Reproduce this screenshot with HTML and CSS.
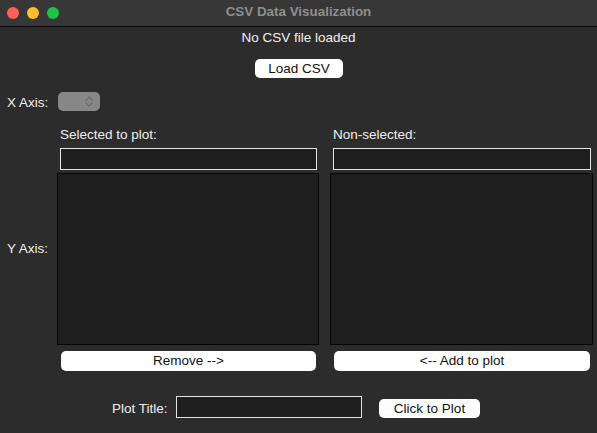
FILE: index.html
```html
<!DOCTYPE html>
<html lang="en">
<head>
<meta charset="utf-8">
<title>CSV Data Visualization</title>
<link rel="stylesheet" href="styles.css">
</head>
<body>
<div class="window">
  <header class="titlebar">
    <div class="lights">
      <span class="light red"></span>
      <span class="light yellow"></span>
      <span class="light green"></span>
    </div>
    <div class="title">CSV Data Visualization</div>
  </header>
  <main class="content">
    <p class="status">No CSV file loaded</p>
    <div class="load-row"><button class="btn load">Load CSV</button></div>
    <div class="xaxis">
      <span class="label">X Axis:</span>
      <div class="combo">
        <svg width="10" height="13" viewBox="0 0 10 13" class="chev">
          <path d="M2 5 L5 2 L8 5" fill="none" stroke="#6c6c6c" stroke-width="1.3" stroke-linecap="round" stroke-linejoin="round"/>
          <path d="M2 8 L5 11 L8 8" fill="none" stroke="#6c6c6c" stroke-width="1.3" stroke-linecap="round" stroke-linejoin="round"/>
        </svg>
      </div>
    </div>
    <div class="lists">
      <div class="col-head left">Selected to plot:</div>
      <div class="col-head right">Non-selected:</div>
      <div class="ylabel">Y Axis:</div>
      <div class="entry left"></div>
      <div class="entry right"></div>
      <div class="listbox left"></div>
      <div class="listbox right"></div>
      <button class="btn wide left">Remove --&gt;</button>
      <button class="btn wide right">&lt;-- Add to plot</button>
    </div>
    <div class="plot-row">
      <span class="label">Plot Title:</span>
      <div class="entry title-entry"></div>
      <button class="btn plot">Click to Plot</button>
    </div>
  </main>
</div>
</body>
</html>
```
FILE: styles.css
```css
* { box-sizing: border-box; }
html, body { margin: 0; padding: 0; }
body {
  width: 597px;
  height: 433px;
  overflow: hidden;
  background: #2c2c2c;
  font-family: "Liberation Sans", Arial, sans-serif;
  font-size: 13.5px;
  color: #efefef;
}
.window {
  width: 597px;
  height: 433px;
  background: #2c2c2c;
  display: flex;
  flex-direction: column;
}
.titlebar {
  height: 27px;
  background: #373737;
  border-bottom: 1px solid #0a0a0a;
  position: relative;
  display: flex;
  align-items: center;
  justify-content: center;
}
.lights {
  position: absolute;
  left: 7px;
  top: 7px;
  display: flex;
  gap: 8px;
}
.light {
  width: 12px;
  height: 12px;
  border-radius: 50%;
  display: block;
}
.red { background: #fe5f57; }
.yellow { background: #febc2e; }
.green { background: #1fc146; }
.title {
  font-weight: bold;
  color: #8e8e8e;
  font-size: 13.4px;
  line-height: 16px;
  margin-top: -2px;
}
.content {
  display: flex;
  flex-direction: column;
  padding-top: 3px;
}
.status {
  margin: 0;
  text-align: center;
  line-height: 16px;
  height: 16px;
}
.load-row {
  display: flex;
  justify-content: center;
  margin-top: 13px;
}
.btn {
  font-family: inherit;
  font-size: 13.5px;
  background: #ffffff;
  color: #111;
  border: none;
  border-radius: 5px;
  padding: 0;
  height: 19px;
  line-height: 19px;
}
.load { width: 88px; margin-left: 1px; }
.xaxis {
  display: flex;
  align-items: center;
  margin-top: 14px;
  height: 19px;
}
.xaxis .label {
  width: 58px;
  padding-left: 7px;
  padding-top: 2px;
}
.combo {
  width: 42px;
  height: 19px;
  background: #878787;
  border-radius: 5px;
  display: flex;
  align-items: center;
  justify-content: flex-end;
  padding-right: 6px;
}
.lists {
  display: grid;
  grid-template-columns: 46px 262px 263px;
  grid-template-rows: 21px 22px 175px 26px;
  column-gap: 11px;
  margin-top: 16px;
}
.left { grid-column: 2; }
.right { grid-column: 3; }
.col-head {
  grid-row: 1;
  align-self: start;
  line-height: 16px;
  padding-left: 3px;
  white-space: nowrap;
}
.ylabel {
  grid-column: 1;
  grid-row: 2 / 4;
  align-self: center;
  padding-left: 7px;
  white-space: nowrap;
  margin-top: 4px;
}
.entry {
  background: #1e1e1e;
  border: 1px solid #e4e4e4;
  height: 22px;
}
.lists .entry {
  grid-row: 2;
  margin: 0 2px 0 3px;
}
.listbox {
  grid-row: 3;
  background: #1e1e1e;
  border: 1px solid #050505;
  margin-top: 3px;
  height: 172px;
}
.wide {
  grid-row: 4;
  margin: 6px 3px 0 4px;
  height: 20px;
  line-height: 20px;
}
.plot-row {
  display: flex;
  align-items: center;
  padding-left: 112px;
  margin-top: 25px;
}
.plot-row .label { width: 64px; padding-top: 2px; white-space: nowrap; }
.title-entry { width: 186px; }
.plot { width: 101px; margin-left: 17px; margin-top: 3px; }
```
